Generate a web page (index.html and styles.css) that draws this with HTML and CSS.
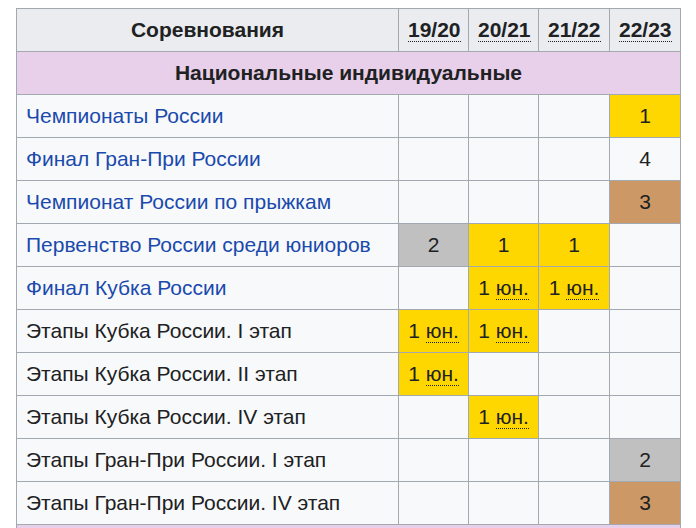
FILE: index.html
```html
<!DOCTYPE html>
<html>
<head>
<meta charset="utf-8">
<link rel="stylesheet" href="styles.css">
</head>
<body>
<table class="wikitable">
<colgroup><col class="c-name"><col class="c-year"><col class="c-year"><col class="c-year2"><col class="c-year2"></colgroup>
<tr class="head"><th>Соревнования</th><th><abbr>19/20</abbr></th><th><abbr>20/21</abbr></th><th><abbr>21/22</abbr></th><th><abbr>22/23</abbr></th></tr>
<tr class="section"><th colspan="5">Национальные индивидуальные</th></tr>
<tr><td><a>Чемпионаты России</a></td><td></td><td></td><td></td><td class="gold">1</td></tr>
<tr><td><a>Финал Гран-При России</a></td><td></td><td></td><td></td><td class="num">4</td></tr>
<tr><td><a>Чемпионат России по прыжкам</a></td><td></td><td></td><td></td><td class="bronze">3</td></tr>
<tr><td><a>Первенство России среди юниоров</a></td><td class="silver">2</td><td class="gold">1</td><td class="gold">1</td><td></td></tr>
<tr><td><a>Финал Кубка России</a></td><td></td><td class="gold">1 <abbr>юн.</abbr></td><td class="gold">1 <abbr>юн.</abbr></td><td></td></tr>
<tr><td>Этапы Кубка России. I этап</td><td class="gold">1 <abbr>юн.</abbr></td><td class="gold">1 <abbr>юн.</abbr></td><td></td><td></td></tr>
<tr><td>Этапы Кубка России. II этап</td><td class="gold">1 <abbr>юн.</abbr></td><td></td><td></td><td></td></tr>
<tr><td>Этапы Кубка России. IV этап</td><td></td><td class="gold">1 <abbr>юн.</abbr></td><td></td><td></td></tr>
<tr><td>Этапы Гран-При России. I этап</td><td></td><td></td><td></td><td class="silver">2</td></tr>
<tr><td>Этапы Гран-При России. IV этап</td><td></td><td></td><td></td><td class="bronze">3</td></tr>
<tr class="section"><th colspan="5">&nbsp;</th></tr>
</table>
</body>
</html>
```
FILE: styles.css
```css
body {
  margin: 8px;
  background: #ffffff;
  font-family: "Liberation Sans", Arial, sans-serif;
  font-size: 21px;
  color: #202122;
}
.wikitable {
  margin: 0 0 0 8px;
  border-collapse: collapse;
  table-layout: fixed;
  width: 665px;
  background: #f8f9fa;
  border: 1px solid #a2a9b1;
}
.c-name { width: 382px; }
.c-year { width: 70px; }
.c-year2 { width: 71px; }
.wikitable th, .wikitable td {
  border: 1px solid #a2a9b1;
  height: 43px;
  padding: 0 9px;
  box-sizing: border-box;
  text-align: center;
  white-space: nowrap;
}
.wikitable td:first-child { text-align: left; }
.head th { background: #eaecf0; font-weight: bold; }
.section th { background: #e8cfea; font-weight: bold; }
a { color: #1a4aad; }
abbr {
  text-decoration: none;
  border-bottom: 1px dotted #202122;
}
.gold { background: #ffd700; }
.silver { background: #c0c0c0; }
.bronze { background: #cc9966; }
```
